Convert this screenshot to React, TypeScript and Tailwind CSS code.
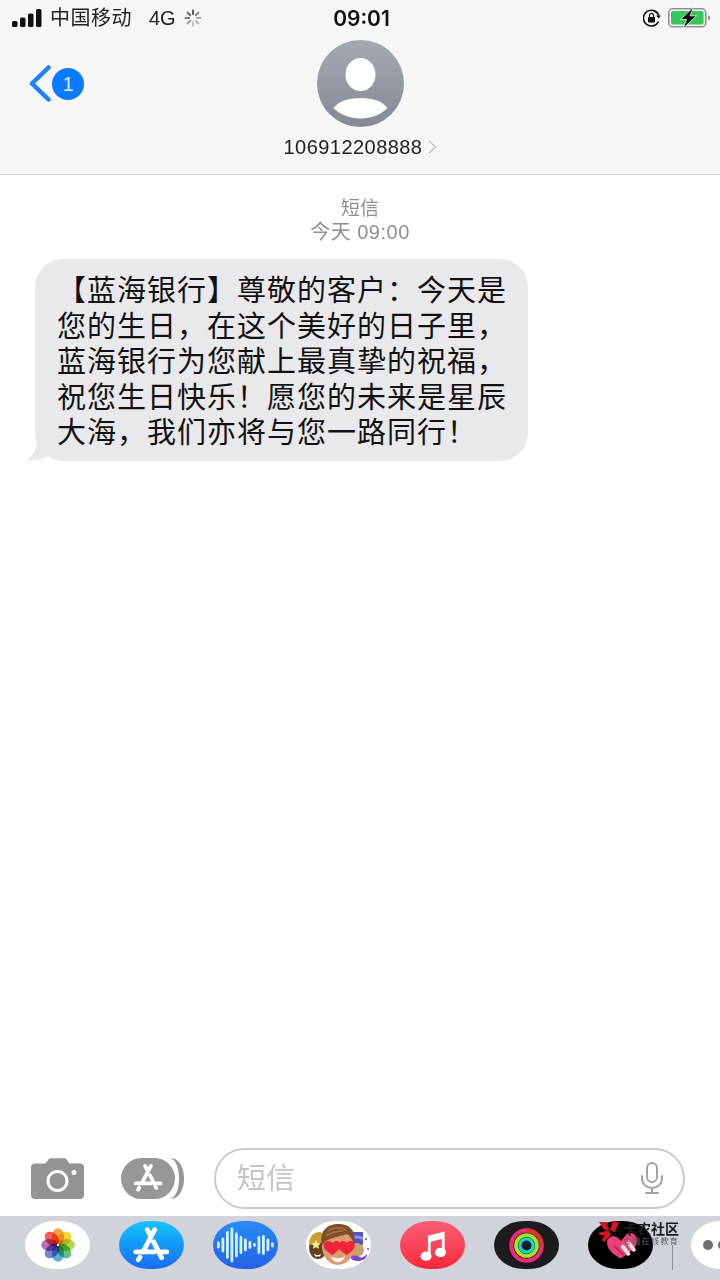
import type { ReactNode } from "react";

const cjk = "font-['Liberation_Sans','Noto_Sans_CJK_SC',sans-serif]";

const messageLines = [
  "【蓝海银行】尊敬的客户：今天是",
  "您的生日，在这个美好的日子里，",
  "蓝海银行为您献上最真挚的祝福，",
  "祝您生日快乐！愿您的未来是星辰",
  "大海，我们亦将与您一路同行！",
];

function SignalBars() {
  return (
    <svg width="31" height="18" viewBox="0 0 31 18">
      <rect x="0" y="12" width="5.5" height="6" rx="1.5" fill="#111" />
      <rect x="8" y="8.5" width="5.5" height="9.5" rx="1.5" fill="#111" />
      <rect x="16" y="4.5" width="5.5" height="13.5" rx="1.5" fill="#111" />
      <rect x="24" y="0" width="5.5" height="18" rx="1.5" fill="#111" />
    </svg>
  );
}

function Spinner() {
  const spokes = [0, 45, 90, 135, 180, 225, 270, 315];
  const shades = ["#555", "#888", "#aaa", "#bbb", "#c4c4c4", "#999", "#777", "#666"];
  return (
    <svg width="18" height="18" viewBox="0 0 18 18">
      {spokes.map((deg, i) => (
        <rect key={deg} x="8" y="0.5" width="2" height="5.5" rx="0.8" fill={shades[i]} transform={`rotate(${deg} 9 9)`} />
      ))}
    </svg>
  );
}

function RotationLock() {
  return (
    <svg width="18" height="18" viewBox="0 0 18 18">
      <path d="M15.5 12.5A7.900 7.900 0 1 1 15.800 6.500" fill="none" stroke="#111" strokeWidth="1.6" />
      <path d="M13.200 6.400h4.800l-2.400 3z" fill="#111" />
      <rect x="5" y="8" width="7" height="5.500" rx="0.8" fill="#111" />
      <path d="M6.500 8V6.300a2 2 0 0 1 4 0V8" fill="none" stroke="#111" strokeWidth="1.2" />
    </svg>
  );
}

function Battery() {
  return (
    <svg width="43" height="22" viewBox="0 0 43 22">
      <rect x="0.8" y="1.800" width="37" height="18" rx="4" fill="none" stroke="#8f8f8f" strokeWidth="1.5" />
      <rect x="3" y="4" width="32.600" height="13.600" rx="2" fill="#34c759" />
      <path d="M40 8.500c1.600.4 2.200 1.200 2.200 2.400s-.6 2-2.200 2.400z" fill="#8f8f8f" />
      <path d="M25 0.500 L12.500 12.500 H18.500 L15 21.500 L28.500 8.800 H22 L25.500 0.500 Z" fill="#111" stroke="#f6f6f6" strokeWidth="0.8" />
    </svg>
  );
}

function PersonAvatar() {
  return (
    <svg width="87" height="87" viewBox="0 0 87 87">
      <defs>
        <linearGradient id="avatar" x1="0" y1="0" x2="0" y2="1">
          <stop offset="0" stopColor="#a5a9b4" />
          <stop offset="1" stopColor="#858994" />
        </linearGradient>
      </defs>
      <circle cx="43.500" cy="43.500" r="43.500" fill="url(#avatar)" />
      <ellipse cx="43.500" cy="34.500" rx="15" ry="16.500" fill="#fff" />
      <path d="M16.500 68C21 61.500 31 58 43.500 58S66 61.500 70.500 68C64 74.500 54 78.500 43.500 78.500S23 74.500 16.500 68Z" fill="#fff" />
    </svg>
  );
}

function CameraIcon() {
  return (
    <svg width="53" height="41" viewBox="0 0 53 41">
      <path d="M4 5.500h9.500c1 0 1.600-.6 2.200-1.500L17 2c.7-1.200 1.700-1.800 3-1.800h13c1.300 0 2.300.6 3 1.800l1.300 2c.6.900 1.200 1.500 2.200 1.500H49c2.400 0 4 1.600 4 4V37c0 2.400-1.600 4-4 4H4c-2.400 0-4-1.600-4-4V9.500c0-2.400 1.600-4 4-4Z" fill="#939393" />
      <circle cx="26.500" cy="23" r="9.500" fill="none" stroke="#fff" strokeWidth="3" />
      <circle cx="43" cy="14.500" r="2.500" fill="#fff" />
    </svg>
  );
}

function AppStoreGlyph({ size, color }: { size: number; color: string }) {
  return (
    <svg width={size} height={size} viewBox="0 0 36 36" fill="none" stroke={color} strokeLinecap="round" strokeWidth="4.600">
      <path d="M21.500 3.500 10.500 24.500M14.500 3.500l2.800 5.500M20.500 15l7.500 15" />
      <path d="M3.500 24.500h18M27.500 24.500h5.500" />
      <path d="M7.500 29.500l-1.500 2.500" />
    </svg>
  );
}

function MicIcon() {
  return (
    <svg width="22" height="32" viewBox="0 0 22 32" fill="none" stroke="#a3a3a3" strokeWidth="2" strokeLinecap="round">
      <rect x="6" y="1" width="10" height="19" rx="5" />
      <path d="M1 14v2.500C1 22 5.500 26 11 26s10-4 10-9.500V14M11 26v5M5 31h12" />
    </svg>
  );
}

function PhotosIcon() {
  const petals = ["#f59a23", "#f8d21c", "#a9d23f", "#4fbf73", "#4aa8d4", "#6f72c9", "#b25cb5", "#ef4d48"];
  return (
    <svg width="34" height="34" viewBox="0 0 36 36">
      {petals.map((fill, i) => (
        <ellipse key={fill} className="mix-blend-multiply" cx="18" cy="9" rx="6.400" ry="8.800" fill={fill} fillOpacity="0.9" transform={`rotate(${i * 45} 18 18)`} />
      ))}
      <circle cx="18" cy="18" r="1.200" fill="#fff" />
    </svg>
  );
}

function WaveIcon() {
  const bars = [7, 15, 28, 35, 25, 18, 13, 8, 4, 18, 20, 13, 5];
  return (
    <svg width="58" height="38" viewBox="0 0 58 38">
      {bars.map((h, i) => (
        <rect key={i} x={i * 4.5 + 1} y={19 - h / 2} width="2.800" height={h} rx="1.400" fill="#d0f3ff" />
      ))}
    </svg>
  );
}

function MemojiIcon() {
  return (
    <svg width="65" height="48" viewBox="0 0 65 48">
      {/* left character */}
      <ellipse cx="12" cy="27" rx="9" ry="11" fill="#5f4023" />
      <path d="M3 24C3 14 9 11 13 11s7 3 7 9l-6 2Z" fill="#c9a032" />
      <path d="M10 19l1.500 3 3.300.4-2.400 2.200.6 3.200-3-1.600-3 1.600.6-3.200-2.400-2.200 3.300-.4Z" fill="#f7e58a" />
      <path d="M8 33c2 1.500 5 1.500 7 0l-1 2.500H9Z" fill="#fff" />
      {/* right character */}
      <path d="M44 11h13v13H44Z" fill="#4f53cc" />
      <path d="M44 16c4-2 9-2 13 0v3c-4-2-9-2-13 0Z" fill="#8f93e6" />
      <ellipse cx="50" cy="29" rx="8" ry="7" fill="#c9a070" />
      <path d="M44 36c4-3 8-1 10 0s4 0 7-3c0 5-5 7-9 7s-6-1-8-4Z" fill="#7a48c8" />
      <circle cx="60" cy="18" r="1" fill="#4f53cc" />
      <circle cx="62" cy="28" r="1" fill="#7a48c8" />
      {/* centre character */}
      <ellipse cx="32" cy="25" rx="16" ry="19" fill="#dd9a72" />
      <path d="M16 24C13 9 22 3 32 3s19 5 16 20c-2-5-4-8-7-10-7 3-19 3-25 11Z" fill="#7f4f2b" />
      <path d="M22 10c5-4 13-4 18-1M20 15c6-4 12-5 17-5" stroke="#a9743f" strokeWidth="1.500" fill="none" />
      <path d="M17.500 25c0-3 2.300-5 5-5 2 0 3.300 1 3.900 2.200.6-1.200 2-2.200 3.800-2.200 2.700 0 4.600 2 4 5-.7 3.700-4.800 7-7.800 9-3-2-8.500-5.300-8.900-9Z" fill="#ef2337" />
      <path d="M32 25c0-3 2.300-5 5-5 2 0 3.300 1 3.900 2.200.6-1.200 2-2.200 3.800-2.200 2.700 0 4.600 2 4 5-.7 3.700-4.800 7-7.800 9-3-2-8.500-5.300-8.900-9Z" fill="#ef2337" />
      <path d="M25 35.500c4 2.500 10 2.500 14-.5-1 4-4 6-7 6s-6-2-7-5.500Z" fill="#fff" />
    </svg>
  );
}

function MusicIcon() {
  return (
    <svg width="26" height="33" viewBox="0 0 28 34" fill="#fff">
      <path d="M8.500 6.500 26.500 2v22h-3V10L11.500 13v17h-3Z" />
      <ellipse cx="6.500" cy="28.500" rx="6" ry="5" />
      <ellipse cx="22" cy="24.500" rx="6" ry="5" />
    </svg>
  );
}

function ActivityRings() {
  return (
    <svg width="35" height="35" viewBox="0 0 36 36" fill="none">
      <circle cx="18" cy="18" r="15.600" stroke="#f0297a" strokeWidth="4.200" />
      <path d="M18 2.400A15.600 15.600 0 0 1 33.600 18" stroke="#d9352c" strokeWidth="4.200" />
      <circle cx="18" cy="18" r="10.800" stroke="#a4e81c" strokeWidth="3.800" />
      <circle cx="18" cy="18" r="6.800" stroke="#14d8d0" strokeWidth="3.400" />
      <circle cx="18" cy="18" r="3.600" fill="#102030" />
    </svg>
  );
}

function HeartGift() {
  return (
    <svg width="32" height="30" viewBox="0 0 40 38">
      <path d="M18 36C8 30 1 24 1 16 1 9 9 5 15 10l4 4 6-8c6-5 14-1 14 7 0 9-10 17-21 23Z" fill="#e83e7a" />
      <path d="M21 21l7 9M28 16l7 9" stroke="#f6dfe4" strokeWidth="5" strokeLinecap="round" />
      <path d="M10 20l12 12" stroke="#a8264f" strokeWidth="2" />
    </svg>
  );
}

function Pill({ className, children }: { className: string; children?: ReactNode }) {
  return (
    <div className={`flex h-12 w-[65px] shrink-0 items-center justify-center overflow-hidden rounded-[30px/24px] ${className}`}>
      {children}
    </div>
  );
}

export default function App() {
  return (
    <div className={`relative flex h-[1280px] w-[720px] flex-col overflow-hidden bg-white text-black ${cjk}`}>
      {/* Header */}
      <header className="h-[175px] shrink-0 border-b border-[#cfcfcf] bg-[#f6f6f6]">
        <div className="grid h-9 grid-cols-3 items-center pr-[9px] pl-3">
          <div className="flex items-center">
            <SignalBars />
            <span className="ml-[7px] text-[20px] leading-none tracking-[0.5px] whitespace-nowrap text-[#222]">中国移动</span>
            <span className="ml-[17px] text-[20px] leading-none text-[#222]">4G</span>
            <span className="ml-2 flex"><Spinner /></span>
          </div>
          <div className="text-center font-['Inter',sans-serif] text-[21px] leading-none font-semibold text-[#111]">09:01</div>
          <div className="flex items-center justify-end gap-[7px]">
            <RotationLock />
            <Battery />
          </div>
        </div>
        <div className="relative flex flex-col items-center pt-[4px]">
          <PersonAvatar />
          <div className="mt-[8px] flex items-center gap-[6px] pl-[1px] text-[20px] leading-6 tracking-[0.45px] text-[#222]">
            106912208888
            <svg width="9" height="14" viewBox="0 0 9 14" fill="none" stroke="#c4c4c4" strokeWidth="1.5">
              <path d="M1 1l6.500 6L1 13" />
            </svg>
          </div>
          {/* back button with unread badge */}
          <div className="absolute top-[29px] left-[29px] flex items-center">
            <svg width="22" height="37" viewBox="0 0 22 37" fill="none" stroke="#1a82fb" strokeWidth="4.5" strokeLinecap="round" strokeLinejoin="round">
              <path d="M19.500 2.500 3 18.500l16.500 16" />
            </svg>
            <span className="ml-[1px] flex h-8 w-8 items-center justify-center rounded-full bg-[#0a7aff] text-[20px] leading-none text-[#dcebff]">1</span>
          </div>
        </div>
      </header>

      {/* Conversation */}
      <main className="flex-1">
        <div className="pt-[23px] text-center text-[#8e8e93]">
          <div className="text-[19px] leading-[21px]">短信</div>
          <div className="mt-[2px] text-[20px] leading-[22px] tracking-[0.5px]">今天 09:00</div>
        </div>
        <div className="relative mt-[16px] ml-[35px] w-[493px] rounded-[28px] bg-[#e9e9eb] pt-[15px] pb-[9.5px] pl-[22px] text-[29px] leading-[35.5px] tracking-[1px] whitespace-nowrap text-[#111]">
          {messageLines.map((line) => (
            <div key={line}>{line}</div>
          ))}
          <svg className="absolute bottom-0 -left-[9px]" width="26" height="22" viewBox="0 0 26 22">
            <path d="M11 0C11 9 8 17 0 21.500 8 22 15 21 22 17L26 0Z" fill="#e9e9eb" />
          </svg>
        </div>
      </main>

      {/* Composer */}
      <div className="flex h-[68px] shrink-0 items-center pr-[35px] pb-[8px] pl-[31px]">
        <CameraIcon />
        <div className="ml-[37px] flex items-center">
          <div className="flex h-[41px] w-[54px] items-center justify-center rounded-[21px] bg-[#979797]">
            <AppStoreGlyph size={30} color="#fff" />
          </div>
          <svg className="-ml-[5px]" width="14" height="41" viewBox="0 0 14 41" fill="#979797">
            <path d="M0 0c9 0 14 9 14 20.500S9 41 0 41c6-2 9-10 9-20.500S6 2 0 0Z" />
          </svg>
        </div>
        <div className="ml-[30px] flex h-[61px] flex-1 items-center justify-between rounded-full border-2 border-[#cacaca] pr-[20px] pl-[21px]">
          <span className="mt-[3px] text-[29px] leading-none text-[#c4c4c6]">短信</span>
          <MicIcon />
        </div>
      </div>

      {/* App strip */}
      <div className="flex h-[64px] shrink-0 items-start gap-[28.8px] overflow-hidden bg-[#d0d3da] pt-[5px] pl-[25px]">
        <Pill className="bg-white"><PhotosIcon /></Pill>
        <Pill className="bg-gradient-to-b from-[#1bc3fb] to-[#1d6bf1]"><AppStoreGlyph size={38} color="#fff" /></Pill>
        <Pill className="bg-gradient-to-b from-[#2a8bf2] to-[#2460e8]"><WaveIcon /></Pill>
        <Pill className="bg-white"><MemojiIcon /></Pill>
        <Pill className="bg-gradient-to-b from-[#fb5c74] to-[#fa233b]"><MusicIcon /></Pill>
        <Pill className="bg-[#1c1c1e]"><ActivityRings /></Pill>
        <Pill className="bg-black pl-[4px]"><HeartGift /></Pill>
        <Pill className="ml-[9px] justify-start bg-white pl-[12px]">
          <span className="h-[10px] w-[10px] rounded-full bg-[#6c6c72]" />
          <span className="ml-[5px] h-[10px] w-[10px] rounded-full bg-[#6c6c72]" />
        </Pill>
      </div>

      {/* Watermark over the strip */}
      <div className="absolute top-[1221px] left-[598px] h-[49px] w-[84px]">
        <svg className="absolute top-0 left-0" width="24" height="22" viewBox="0 0 26 24" fill="#d7132a">
          <path d="M1 1h8l3 8-5 1ZM16 0l7 2-5 10-5-2ZM0 13l11-3 3 5-7 8-3-2 3-5-5-1Z" />
        </svg>
        <span className="absolute top-0 right-[3px] text-[14px] leading-[17px] font-bold whitespace-nowrap text-[#1b1b1d]">卡农社区</span>
        <span className="absolute top-[15px] right-[3px] text-[8px] leading-[12px] tracking-[1.3px] whitespace-nowrap text-[#5d5d63]">金融在线教育</span>
        <span className="absolute top-[24px] left-[74px] h-[25px] w-px bg-[#8d8f95]" />
      </div>
    </div>
  );
}
